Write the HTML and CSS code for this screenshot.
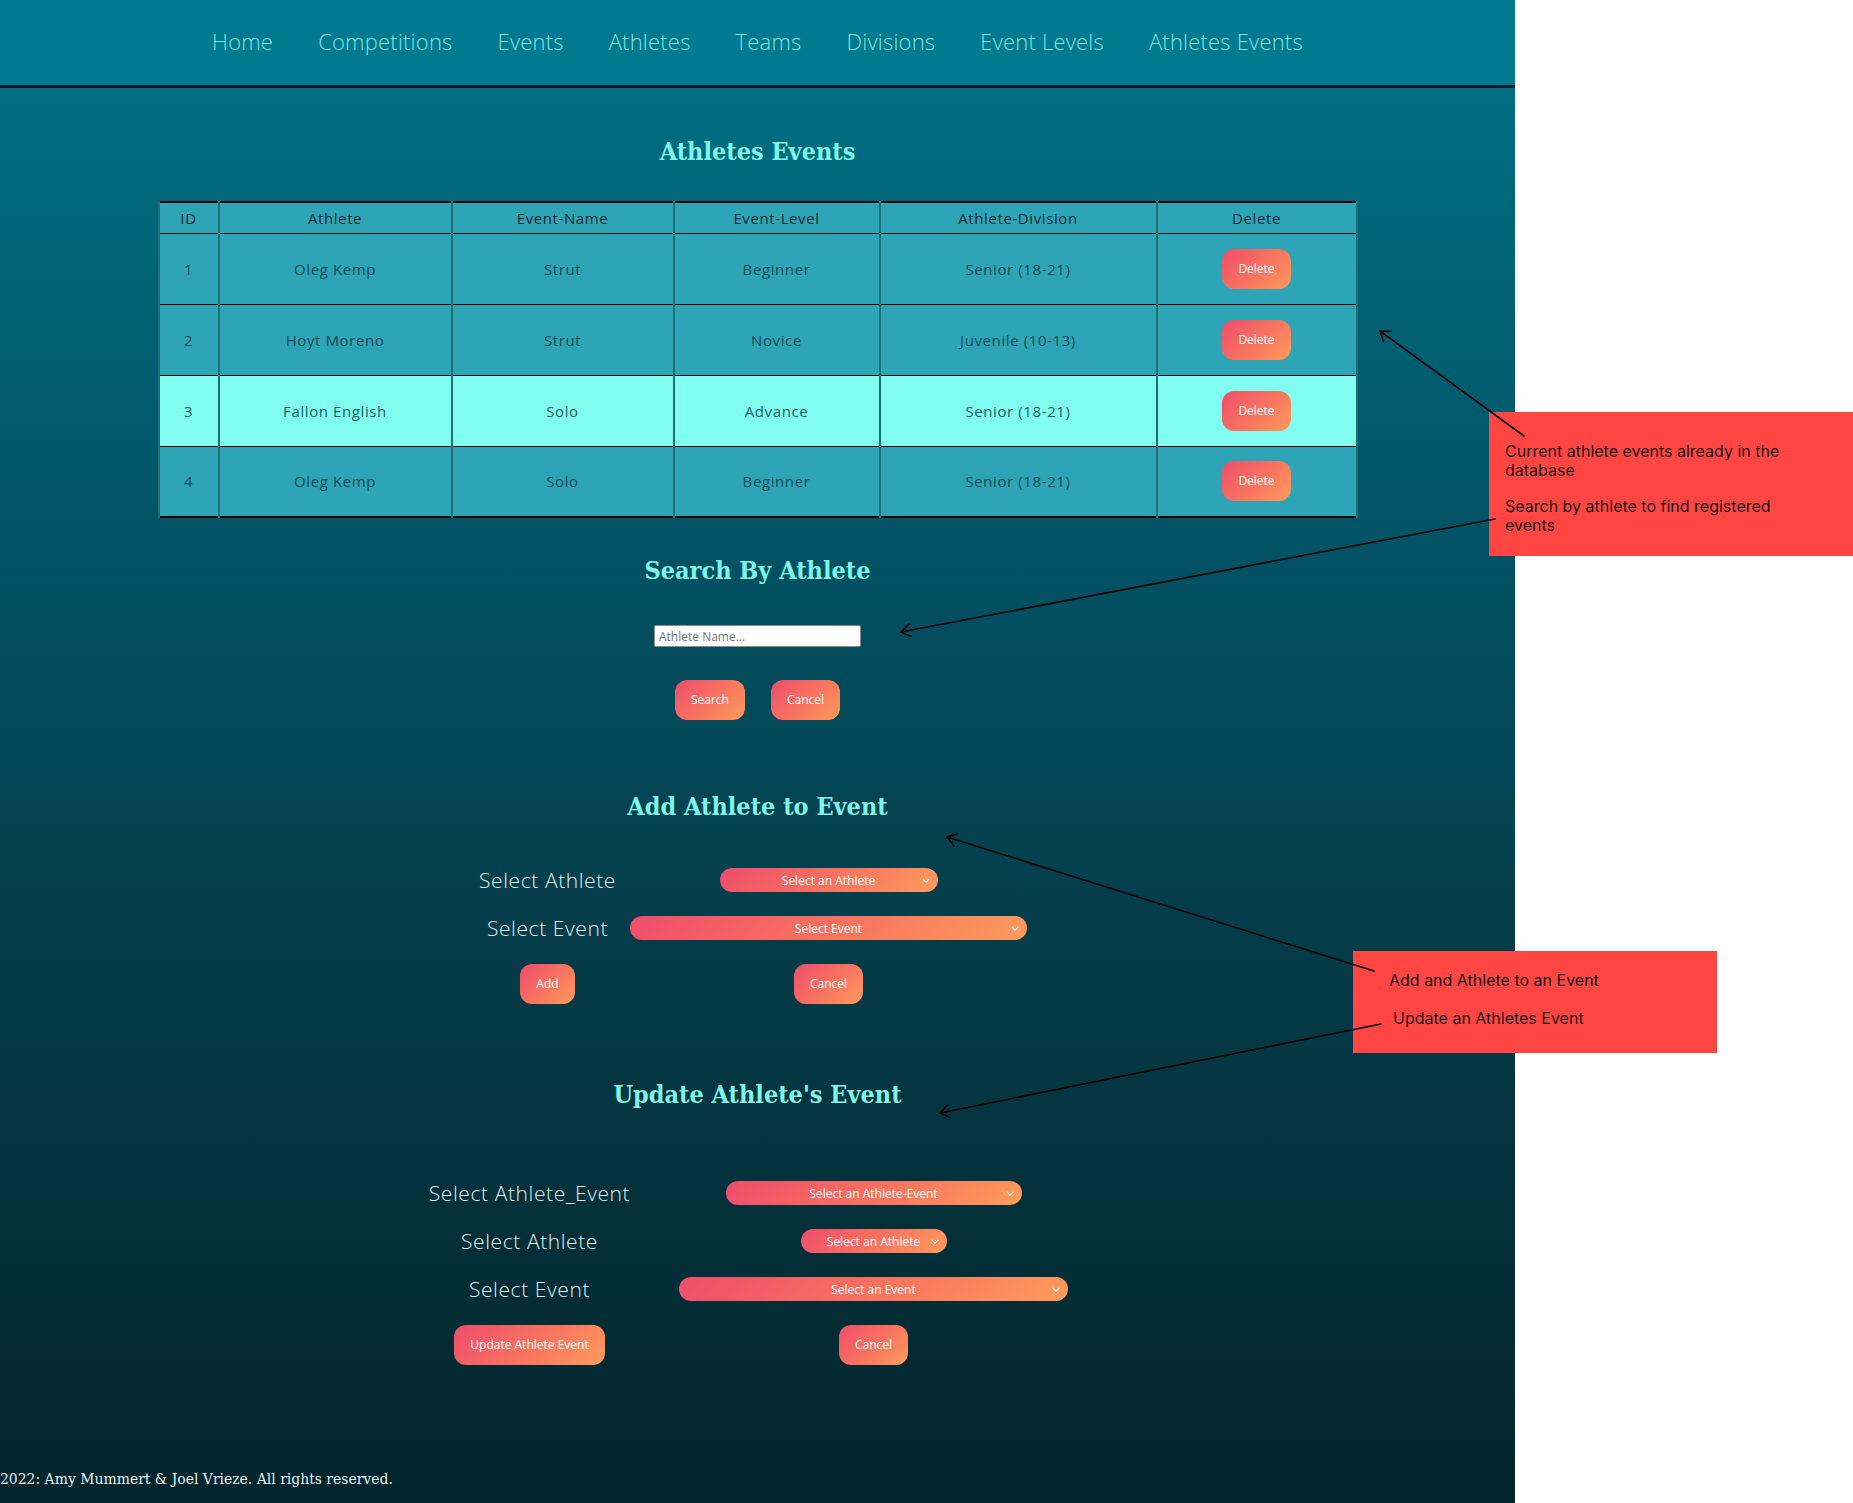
FILE: index.html
```html
<!DOCTYPE html>
<html lang="en">
<head>
<meta charset="utf-8">
<title>Athletes Events</title>
<link rel="stylesheet" href="styles.css">
</head>
<body>
<div class="screen">
  <div class="page">
    <nav class="nav">
      <a href="#">Home</a>
      <a href="#">Competitions</a>
      <a href="#">Events</a>
      <a href="#">Athletes</a>
      <a href="#">Teams</a>
      <a href="#">Divisions</a>
      <a href="#">Event Levels</a>
      <a href="#">Athletes Events</a>
    </nav>
    <main class="main">
      <h1 class="title title-list">Athletes Events</h1>
      <table class="events">
        <colgroup>
          <col class="c-id"><col class="c-ath"><col class="c-ev"><col class="c-lvl"><col class="c-div"><col class="c-del">
        </colgroup>
        <thead>
          <tr><th>ID</th><th>Athlete</th><th>Event-Name</th><th>Event-Level</th><th>Athlete-Division</th><th>Delete</th></tr>
        </thead>
        <tbody>
          <tr><td>1</td><td>Oleg Kemp</td><td>Strut</td><td>Beginner</td><td>Senior (18-21)</td><td><button class="btn">Delete</button></td></tr>
          <tr><td>2</td><td>Hoyt Moreno</td><td>Strut</td><td>Novice</td><td>Juvenile (10-13)</td><td><button class="btn">Delete</button></td></tr>
          <tr class="hl"><td>3</td><td>Fallon English</td><td>Solo</td><td>Advance</td><td>Senior (18-21)</td><td><button class="btn">Delete</button></td></tr>
          <tr><td>4</td><td>Oleg Kemp</td><td>Solo</td><td>Beginner</td><td>Senior (18-21)</td><td><button class="btn">Delete</button></td></tr>
        </tbody>
      </table>

      <h2 class="title title-search">Search By Athlete</h2>
      <div class="search">
        <input class="search-input" type="text" placeholder="Athlete Name...">
        <div class="btn-row">
          <button class="btn">Search</button>
          <button class="btn">Cancel</button>
        </div>
      </div>

      <h2 class="title title-add">Add Athlete to Event</h2>
      <div class="form form-add">
        <div class="cell"><label class="lbl">Select Athlete</label></div>
        <div class="cell"><span class="sel w-218"><select><option>Select an Athlete</option></select><svg class="chev" viewBox="0 0 10 6"><path d="M1 1l4 4 4-4"/></svg></span></div>
        <div class="cell"><label class="lbl">Select Event</label></div>
        <div class="cell"><span class="sel w-397"><select><option>Select Event</option></select><svg class="chev" viewBox="0 0 10 6"><path d="M1 1l4 4 4-4"/></svg></span></div>
        <div class="cell"><button class="btn">Add</button></div>
        <div class="cell"><button class="btn">Cancel</button></div>
      </div>

      <h2 class="title title-update">Update Athlete's Event</h2>
      <div class="form form-update">
        <div class="cell"><label class="lbl">Select Athlete_Event</label></div>
        <div class="cell"><span class="sel w-296"><select><option>Select an Athlete-Event</option></select><svg class="chev" viewBox="0 0 10 6"><path d="M1 1l4 4 4-4"/></svg></span></div>
        <div class="cell"><label class="lbl">Select Athlete</label></div>
        <div class="cell"><span class="sel w-146"><select><option>Select an Athlete</option></select><svg class="chev" viewBox="0 0 10 6"><path d="M1 1l4 4 4-4"/></svg></span></div>
        <div class="cell"><label class="lbl">Select Event</label></div>
        <div class="cell"><span class="sel w-389"><select><option>Select an Event</option></select><svg class="chev" viewBox="0 0 10 6"><path d="M1 1l4 4 4-4"/></svg></span></div>
        <div class="cell"><button class="btn">Update Athlete Event</button></div>
        <div class="cell"><button class="btn">Cancel</button></div>
      </div>
    </main>
    <footer class="footer">2022: Amy Mummert &amp; Joel Vrieze. All rights reserved.</footer>
  </div>

  <div class="note note-1">
    <p>Current athlete events already in the database</p>
    <p>Search by athlete to find registered events</p>
  </div>
  <div class="note note-2">
    <p>Add and Athlete to an Event</p>
    <p class="indent">Update an Athletes Event</p>
  </div>

  <svg class="arrows" viewBox="0 0 1853 1503" width="1853" height="1503">
    <g fill="none" stroke="#000" stroke-width="1.6" stroke-linecap="round" stroke-linejoin="round">
      <path d="M1524 436L1380 331M1383.6 341.4L1380 331L1391 331.2"/>
      <path d="M1495 519L901 632M911 636.5L901 632L908.7 624.1"/>
      <path d="M1374 971L947 837M953.7 845.7L947 837L957.5 833.7"/>
      <path d="M1381 1024L940 1113M950.1 1117.4L940 1113L947.6 1105"/>
    </g>
  </svg>
</div>
</body>
</html>
```

FILE: styles.css
```css
* { box-sizing: border-box; }
html, body { margin: 0; padding: 0; background: #fff; }

.screen {
  position: relative;
  width: 1853px;
  height: 1503px;
  display: flex;
  overflow: hidden;
  background: #fff;
}

.page {
  width: 1515px;
  min-height: 1503px;
  display: flex;
  flex-direction: column;
  background: linear-gradient(to bottom, #01788d 0%, #016c80 8%, #02586a 30%, #034756 50%, #053e4b 60%, #04323c 78%, #03252d 100%);
}

/* nav */
.nav {
  height: 88px;
  background: #017a8f;
  border-bottom: 3px solid #0a1c21;
  display: flex;
  justify-content: center;
  align-items: center;
  gap: 45px;
  padding-bottom: 4px;
}
.nav a {
  font-family: "Open Sans", sans-serif;
  font-weight: 300;
  font-size: 22px;
  letter-spacing: 0.2px;
  color: #7fe3df;
  text-decoration: none;
}

.main {
  display: flex;
  flex-direction: column;
  align-items: center;
}

.title {
  margin: 0;
  font-family: "DejaVu Serif Condensed", "DejaVu Serif", serif;
  font-stretch: condensed;
  font-weight: bold;
  font-size: 25px;
  line-height: 32px;
  color: #7ff5e8;
  text-align: center;
}
.title-list { margin-top: 48px; }
.title-search { margin-top: 37px; }
.title-add { margin-top: 71px; }
.title-update { margin-top: 63px; }

/* table */
.events {
  margin-top: 33px;
  width: 1198px;
  table-layout: fixed;
  border-collapse: collapse;
  border: 2px solid #000;
  font-family: "Open Sans", sans-serif;
  text-align: center;
}
.c-id { width: 60px; }
.c-ath { width: 233px; }
.c-ev { width: 222px; }
.c-lvl { width: 206px; }
.c-div { width: 277px; }
.c-del { width: 200px; }

.events th, .events td {
  background: #2ea5b7;
  border-left: 2px solid #216d74;
  border-right: 2px solid #216d74;
  border-top: 1px solid #000;
  border-bottom: 1px solid #000;
  padding: 0;
}
.events th {
  height: 31px;
  font-weight: 500;
  font-size: 15px;
  letter-spacing: 0.6px;
  color: #0d2b30;
}
.events td {
  height: 71px;
  font-weight: 400;
  font-size: 15px;
  letter-spacing: 0.6px;
  color: #174c55;
}
.events tr.hl td {
  background: #80fff0;
  color: #245f64;
}
.events td .btn { letter-spacing: 0; }

/* buttons */
.btn {
  border: none;
  border-radius: 12px;
  padding: 12px 16px;
  background: linear-gradient(135deg, #ef4d6b 0%, #f8755f 55%, #ff9c5c 100%);
  color: #fff;
  font-family: "Open Sans", sans-serif;
  font-size: 12px;
  line-height: 16px;
  cursor: pointer;
}

/* search */
.search {
  margin-top: 38px;
  display: flex;
  flex-direction: column;
  align-items: center;
}
.search-input {
  width: 207px;
  height: 22px;
  border: 1px solid #8a8f94;
  border-radius: 2px;
  padding: 0 4px;
  font-family: "Open Sans", sans-serif;
  font-size: 12px;
  background: #fff;
}
.search-input::placeholder { color: #757575; }
.btn-row {
  margin-top: 33px;
  display: flex;
  gap: 26px;
}

/* forms */
.form {
  display: grid;
  justify-content: center;
}
.form-add { margin-top: 33px; grid-template-columns: 142px 420px; }
.form-update { margin-top: 58px; grid-template-columns: 232px 456px; }

.cell {
  padding: 12px 0;
  display: flex;
  justify-content: center;
  align-items: center;
}
.lbl {
  font-family: "Open Sans", sans-serif;
  font-weight: 300;
  font-size: 21px;
  letter-spacing: 0.6px;
  line-height: 24px;
  color: #e2ecee;
  white-space: nowrap;
}

.sel {
  position: relative;
  display: block;
  height: 24px;
}
.sel select {
  appearance: none;
  -webkit-appearance: none;
  width: 100%;
  height: 24px;
  border: none;
  border-radius: 12px;
  background: linear-gradient(135deg, #ef4d6b 0%, #f8755f 55%, #ff9c5c 100%);
  color: #fff;
  font-family: "Open Sans", sans-serif;
  font-size: 12px;
  text-align: center;
  text-align-last: center;
  padding: 0 18px;
}
.chev {
  position: absolute;
  right: 8px;
  top: 10px;
  width: 8px;
  height: 5px;
  fill: none;
  stroke: #fff;
  stroke-width: 1.6;
  pointer-events: none;
}
.w-218 { width: 218px; }
.w-397 { width: 397px; }
.w-296 { width: 296px; }
.w-146 { width: 146px; }
.w-389 { width: 389px; }

/* footer */
.footer {
  margin-top: auto;
  padding: 0 0 14px 0;
  font-family: "DejaVu Serif Condensed", "DejaVu Serif", serif;
  font-stretch: condensed;
  font-size: 15.5px;
  line-height: 20px;
  color: #e8eeee;
}

/* annotations */
.note {
  position: absolute;
  background: #ff4642;
  font-family: Inter, "Noto Sans", sans-serif;
  font-size: 16px;
  line-height: 19px;
  color: #1c1414;
}
.note p { margin: 0; }
.note-1 {
  left: 1489px;
  top: 412px;
  width: 364px;
  height: 144px;
  padding: 30px 0 0 16px;
}
.note-1 p { width: 290px; }
.note-1 p + p { margin-top: 17px; }
.note-2 {
  left: 1353px;
  top: 951px;
  width: 364px;
  height: 102px;
  padding: 20px 0 0 36px;
}
.note-2 p + p { margin-top: 19px; }
.note-2 .indent { padding-left: 4px; }

.arrows {
  position: absolute;
  left: 0;
  top: 0;
  pointer-events: none;
}
```
